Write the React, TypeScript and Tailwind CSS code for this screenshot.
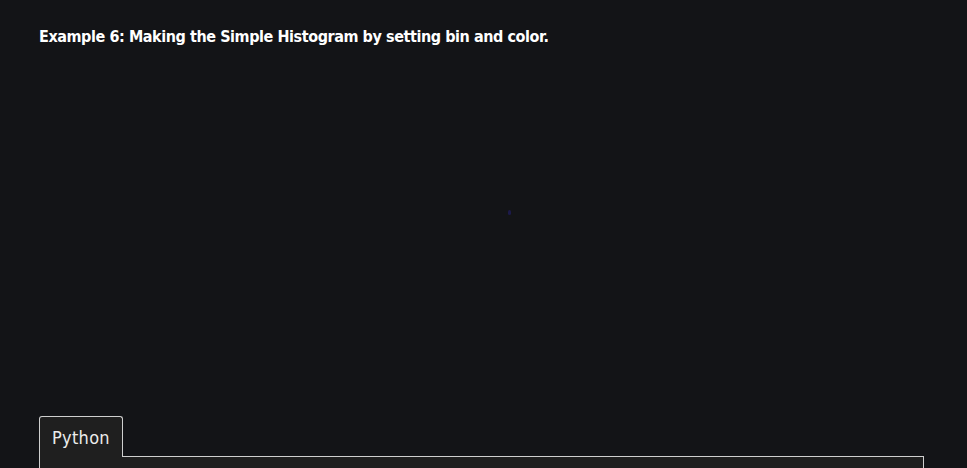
export default function App() {
  return (
    <div className="h-[468px] bg-[#131417] pl-[39px] pr-[43px] pt-[26px] overflow-hidden">
      {/* Heading */}
      <h3
        className="text-[16px] leading-[22px] font-bold text-white tracking-[-0.43px]"
        style={{ fontFamily: '"DejaVu Sans Condensed", "DejaVu Sans", sans-serif' }}
      >
        Example 6: Making the Simple Histogram by setting bin and color.
      </h3>

      {/* Chart area (not loaded yet) */}
      <div className="h-[368px] flex items-center justify-center">
        <div className="w-[3px] h-[5px] bg-[#1c1a4a] rounded-sm ml-[56px] mt-[-40px]" />
      </div>

      {/* Code tabs */}
      <div className="flex flex-col">
        <div className="flex">
          <button
            className="relative z-10 -mb-px h-[41px] w-[84px] rounded-t-[3px] border border-b-0 border-[#cfcfcf] bg-[#1f1f1f] pl-[12px] text-left text-[18px] tracking-[0.3px] text-[#ececec]"
            style={{ fontFamily: '"DejaVu Sans Condensed", "DejaVu Sans", sans-serif' }}
          >
            Python
          </button>
        </div>
        <div className="h-[40px] border-x border-t border-[#cfcfcf] bg-[#1f1f1f]" />
      </div>
    </div>
  );
}
